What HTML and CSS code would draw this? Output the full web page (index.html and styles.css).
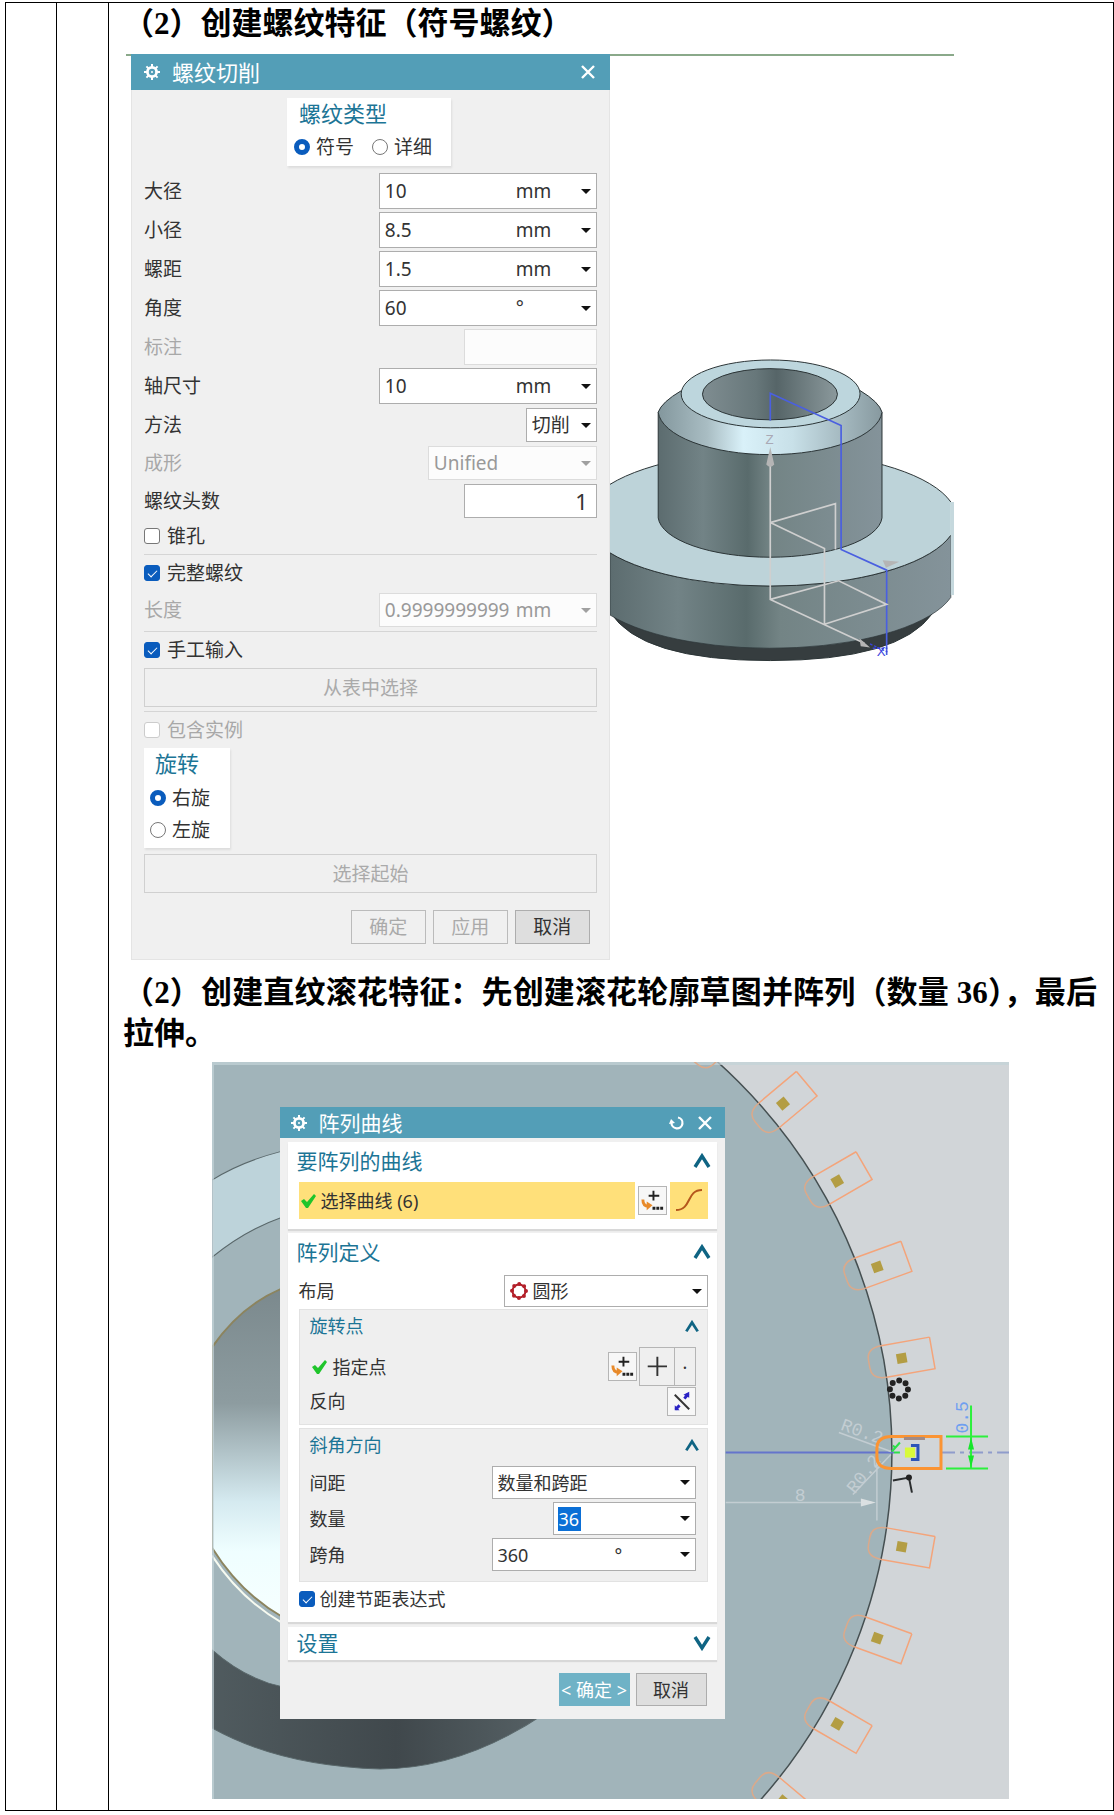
FILE: index.html
```html
<!DOCTYPE html>
<html lang="zh-CN">
<head>
    <meta charset="UTF-8">
    <meta name="viewport" content="width=device-width, initial-scale=1.0">
    <title>创建螺纹特征</title>
    <link rel="stylesheet" href="styles.css">
</head>
<body>

<svg width="0" height="0" class="sprite" aria-hidden="true">
    <symbol id="gear" viewBox="0 0 16 16">
        <circle cx="8" cy="8" r="4.6" fill="none" stroke="currentColor" stroke-width="2.8"/>
        <path d="M8 0v3M8 13v3M0 8h3M13 8h3M2.4 2.4l2 2M11.6 11.6l2 2M2.4 13.6l2-2M11.6 4.4l2-2" stroke="currentColor" stroke-width="2"/>
        <circle cx="8" cy="8" r="1" fill="currentColor"/>
    </symbol>
    <symbol id="close" viewBox="0 0 16 16">
        <path d="M2 2l12 12M14 2L2 14" fill="none" stroke="currentColor" stroke-width="2.4"/>
    </symbol>
    <symbol id="reset" viewBox="0 0 16 16">
        <path d="M9 2.5a5.5 5.5 0 1 1-6.5 5" fill="none" stroke="currentColor" stroke-width="2.2"/>
        <path d="M0 9l2-5 4 4z" fill="currentColor"/>
    </symbol>
    <symbol id="up" viewBox="0 0 18 16">
        <path d="M2 14L9 3l7 11" fill="none" stroke="currentColor" stroke-width="3.4"/>
    </symbol>
    <symbol id="down" viewBox="0 0 18 16">
        <path d="M2 2l7 11 7-11" fill="none" stroke="currentColor" stroke-width="3.4"/>
    </symbol>
    <symbol id="ok" viewBox="0 0 16 16">
        <path d="M1 8l3-2 3 3 7-8 2 2-8 12H6z" fill="#1fc52b"/>
    </symbol>
    <symbol id="point" viewBox="0 0 28 28">
        <path d="M15 4v10M10 9h11" stroke="#222" stroke-width="2"/>
        <path d="M4 13c0 5 2 7 6 7" fill="none" stroke="#e88a2a" stroke-width="3"/>
        <path d="M8 15l6 4-6 5z" fill="#e88a2a"/>
        <path d="M14 22h3M18 22h3M22 22h3" stroke="#222" stroke-width="3"/>
    </symbol>
</svg>

<table class="sheet">
<tr>
<td class="narrow"></td>
<td class="narrow"></td>
<td class="content">

    <h2>（2）创建螺纹特征（符号螺纹）</h2>

    <div class="figure thread">
        <form class="dialog">
            <div class="titlebar">
                <svg class="icon"><use href="#gear"/></svg>
                <span class="title">螺纹切削</span>
                <button type="button" aria-label="关闭"><svg class="icon"><use href="#close"/></svg></button>
            </div>
            <div class="body">
                <div class="card type">
                    <h3>螺纹类型</h3>
                    <div class="radios">
                        <label><input type="radio" name="type" checked>符号</label>
                        <label><input type="radio" name="type">详细</label>
                    </div>
                </div>

                <div class="rows">
                    <div class="row"><label for="major">大径</label>
                        <div class="field"><input id="major" value="10"><span class="unit">mm</span><button type="button" class="caret" aria-label="选项"></button></div></div>
                    <div class="row"><label for="minor">小径</label>
                        <div class="field"><input id="minor" value="8.5"><span class="unit">mm</span><button type="button" class="caret" aria-label="选项"></button></div></div>
                    <div class="row"><label for="pitch">螺距</label>
                        <div class="field"><input id="pitch" value="1.5"><span class="unit">mm</span><button type="button" class="caret" aria-label="选项"></button></div></div>
                    <div class="row"><label for="angle">角度</label>
                        <div class="field"><input id="angle" value="60"><span class="unit">°</span><button type="button" class="caret" aria-label="选项"></button></div></div>
                    <div class="row off"><label for="callout">标注</label>
                        <div class="field short"><input id="callout" disabled></div></div>
                    <div class="row"><label for="shaft">轴尺寸</label>
                        <div class="field"><input id="shaft" value="10"><span class="unit">mm</span><button type="button" class="caret" aria-label="选项"></button></div></div>
                </div>

                <div class="rows tight">
                    <div class="row"><label for="method">方法</label>
                        <div class="select tiny"><select id="method"><option>切削</option></select></div></div>
                    <div class="row off"><label for="form">成形</label>
                        <div class="select mid"><select id="form" disabled><option>Unified</option></select></div></div>
                    <div class="row"><label for="starts">螺纹头数</label>
                        <div class="field short count"><input id="starts" value="1"></div></div>
                </div>

                <label class="check"><input type="checkbox">锥孔</label>
                <hr>
                <label class="check"><input type="checkbox" checked>完整螺纹</label>
                <div class="rows tight">
                    <div class="row off"><label for="length">长度</label>
                        <div class="field"><input id="length" value="0.99999999999" disabled><span class="unit">mm</span><button type="button" class="caret" aria-label="选项" disabled></button></div></div>
                </div>
                <hr class="spaced">
                <label class="check"><input type="checkbox" checked>手工输入</label>
                <button type="button" class="wide" disabled>从表中选择</button>
                <hr class="spaced">
                <label class="check off"><input type="checkbox" disabled>包含实例</label>

                <div class="card rotate">
                    <h3>旋转</h3>
                    <label><input type="radio" name="hand" checked>右旋</label>
                    <label><input type="radio" name="hand">左旋</label>
                </div>
                <button type="button" class="wide" disabled>选择起始</button>

                <div class="actions">
                    <button type="button" disabled>确定</button>
                    <button type="button" disabled>应用</button>
                    <button type="button">取消</button>
                </div>
            </div>
        </form>

        <svg class="model" viewBox="30 40 1035 940">
            <defs>
                <linearGradient id="wall">
                    <stop offset="0" stop-color="#5c6c6f"/><stop offset=".2" stop-color="#728386"/>
                    <stop offset=".4" stop-color="#596b6c"/><stop offset=".5" stop-color="#738485"/>
                    <stop offset="1" stop-color="#84939a"/>
                </linearGradient>
                <linearGradient id="bevel">
                    <stop offset="0" stop-color="#83979d"/><stop offset=".22" stop-color="#a9bdc3"/>
                    <stop offset=".38" stop-color="#d9f1f9"/><stop offset=".6" stop-color="#c8e0e8"/>
                    <stop offset="1" stop-color="#87999f"/>
                </linearGradient>
                <linearGradient id="bore">
                    <stop offset="0" stop-color="#7f8d91"/><stop offset=".4" stop-color="#67777a"/>
                    <stop offset=".55" stop-color="#566568"/><stop offset="1" stop-color="#8b999c"/>
                </linearGradient>
            </defs>
            <g stroke="#2b3436" stroke-width="3">
                <path d="M30 815Q120 962 512 962Q900 962 1000 820z" fill="#363d3f"/>
                <path d="M30 638V825A560 203 0 0 0 1055 772V585A560 203 0 0 1 30 638z" fill="url(#wall)" stroke-width="2"/>
                <path d="M30 432A560 203 0 0 1 1055 485V585A560 203 0 0 1 30 638z" fill="#bdd3d9" stroke="none"/>
                <path d="M30 432A560 203 0 0 1 1055 485M1055 585A560 203 0 0 1 30 638" fill="none"/>
                <path d="M175 215V533A337 125 0 0 0 848 533V215z" fill="url(#wall)"/>
                <path d="M175 215Q185 185 245 150H782Q840 185 848 215A337 135 0 0 1 175 215z" fill="url(#bevel)"/>
                <ellipse cx="513" cy="160" rx="269" ry="102" fill="#bdd6dd"/>
                <ellipse cx="511" cy="161" rx="203" ry="77" fill="url(#bore)"/>
            </g>
            <path d="M1055 485h10v280h-10z" fill="#c5d8dd"/>
            <path d="M512 240V158L725 255V628L862 690V945" fill="none" stroke="#4a5fe0" stroke-width="5"/>
            <g fill="none" stroke="#cfcfcf" stroke-width="5">
                <path d="M512 370V778L795 910M512 547L708 490V628M512 547L675 625V853M512 778L718 722L862 793L675 853"/>
            </g>
            <path d="M512 320l12 52q-12 14-24 0zM780 895l32 28-28-4zM850 660l50 5-40 18z" fill="#b5b5b5"/>
            <text x="498" y="310" class="axis z">Z</text>
            <text x="832" y="948" class="axis x">X</text>
            <path d="M812 912l52 24M820 925h44" stroke="#3b45dd" stroke-width="4" stroke-dasharray="8 5"/>
        </svg>
    </div>

    <p>（2）创建直纹滚花特征：先创建滚花轮廓草图并阵列（数量 36），最后拉伸。</p>

    <div class="figure pattern">
        <svg class="sketch" viewBox="212 1062 797 736" preserveAspectRatio="xMinYMin slice">
            <defs>
                <linearGradient id="hole" x2="0" y2="1">
                    <stop offset="0" stop-color="#7b898d"/><stop offset=".35" stop-color="#8d9ca0"/>
                    <stop offset=".65" stop-color="#d5eaf0"/><stop offset=".8" stop-color="#effeff"/>
                    <stop offset="1" stop-color="#f6ffff"/>
                </linearGradient>
                <linearGradient id="shade">
                    <stop offset="0" stop-color="#505b5f"/><stop offset=".5" stop-color="#40484c"/>
                    <stop offset="1" stop-color="#5b676b"/>
                </linearGradient>
                <g id="slot">
                    <path d="M940 1436v32h-49M940 1436h-49" fill="none" stroke="#f4a47a" stroke-width="1.5"/>
                    <path d="M891 1468q-15 0-15-12v-8q0-12 15-12" fill="none" stroke="#dba98a" stroke-width="1.5"/>
                    <path d="M904 1447h10v10h-10z" fill="#b39d43"/>
                </g>
            </defs>
            <path d="M212 1062h797v736H212z" fill="#d1d5d8"/>
            <circle cx="367" cy="1452" r="524" fill="#a1b4ba" stroke="#454f51" stroke-width="1.5"/>
            <g stroke="#59676a">
                <path d="M212 1180Q240 1162 282 1151V1217Q245 1230 212 1257z" fill="#bdd3da"/>
                <path d="M212 1347Q240 1306 282 1288V1616Q240 1592 212 1547z" fill="url(#hole)" stroke="#8c845e" stroke-width="2"/>
                <path d="M212 1555Q240 1598 282 1622" fill="none" stroke="#f6faf0" stroke-width="2"/>
                <path d="M212 1649Q245 1678 282 1686H580Q480 1768 380 1768Q280 1765 212 1727z" fill="url(#shade)"/>
            </g>
            <path d="M212 1062h2v736h-2zM212 1062h797v3H212z" fill="#c3d3d8" opacity=".7"/>

            <use href="#slot" transform="rotate(-50 367 1452)"/>
            <use href="#slot" transform="rotate(-40 367 1452)"/>
            <use href="#slot" transform="rotate(-30 367 1452)"/>
            <use href="#slot" transform="rotate(-20 367 1452)"/>
            <use href="#slot" transform="rotate(-10 367 1452)"/>
            <use href="#slot" transform="rotate(10 367 1452)"/>
            <use href="#slot" transform="rotate(20 367 1452)"/>
            <use href="#slot" transform="rotate(30 367 1452)"/>
            <use href="#slot" transform="rotate(40 367 1452)"/>

            <path d="M725 1452h168" stroke="#6474cc" stroke-width="2"/>
            <path d="M940 1452h69" stroke="#8f9ccb" stroke-width="2" stroke-dasharray="14 5 4 5"/>
            <g stroke="#c3cdd2" fill="none" stroke-width="1.5">
                <path d="M725 1502h146M876 1462v58M838 1432l52 19M852 1494l38-40"/>
            </g>
            <path d="M860 1498l15 4-15 4z" fill="#dbe0e2"/>
            <g class="dim">
                <text x="794" y="1500">8</text>
                <text x="839" y="1429" transform="rotate(20 839 1429)">R0.2</text>
                <text x="854" y="1494" transform="rotate(-52 854 1494)">R0.2</text>
                <text x="967" y="1433" class="blue" transform="rotate(-90 967 1433)">0.5</text>
            </g>
            <path d="M945 1436h42M945 1468h42M970 1405v63" stroke="#2cf03c" stroke-width="2"/>
            <path d="M970 1437l3 12h-6zM970 1467l3-12h-6z" fill="#16e62a"/>
            <path d="M940 1436v32h-49q-15 0-15-12v-8q0-12 15-12z" fill="none" stroke="#fb9433" stroke-width="3"/>
            <path d="M903 1438h21" stroke="#a08a86" stroke-width="3"/>
            <path d="M910 1445h7v14h-7" fill="none" stroke="#2c55b8" stroke-width="3"/>
            <path d="M904 1447h10v10h-10z" fill="#d8fa39"/>
            <path d="M891 1451l8-9M893 1452h6M892 1445l3 3" stroke="#2be04a" stroke-width="2"/>
            <path d="M892 1480l16-3 3 15" fill="none" stroke="#2a2d2e" stroke-width="2"/>
            <circle cx="908" cy="1477" r="3" fill="#222"/>
            <circle cx="898" cy="1389" r="9" fill="none" stroke="#222" stroke-width="6" stroke-linecap="round" stroke-dasharray="0 7.07"/>
        </svg>

        <form class="dialog">
            <div class="titlebar">
                <svg class="icon"><use href="#gear"/></svg>
                <span class="title">阵列曲线</span>
                <button type="button" aria-label="重置"><svg class="icon"><use href="#reset"/></svg></button>
                <button type="button" aria-label="关闭"><svg class="icon"><use href="#close"/></svg></button>
            </div>

            <div class="section curves">
                <div class="head"><h3>要阵列的曲线</h3><svg class="chevron"><use href="#up"/></svg></div>
                <div class="pick">
                    <div class="selected"><svg class="icon"><use href="#ok"/></svg>选择曲线 (6)</div>
                    <button type="button" class="tool" aria-label="指定点"><svg><use href="#point"/></svg></button>
                    <button type="button" class="curve" aria-label="曲线">
                        <svg viewBox="0 0 38 37"><path d="M6 28c16 0 10-20 26-20" fill="none" stroke="#b5561c" stroke-width="2"/></svg>
                    </button>
                </div>
            </div>

            <div class="section define">
                <div class="head"><h3>阵列定义</h3><svg class="chevron"><use href="#up"/></svg></div>
                <div class="row layout"><label for="layout">布局</label>
                    <div class="select with-icon">
                        <svg class="ring" viewBox="0 0 18 18">
                            <circle cx="9" cy="9" r="6.5" fill="none" stroke="#b3202a" stroke-width="2"/>
                            <circle cx="9" cy="9" r="7" fill="none" stroke="#b3202a" stroke-width="4" stroke-linecap="round" stroke-dasharray="0 5.5"/>
                        </svg>
                        <select id="layout"><option>圆形</option></select>
                    </div>
                </div>

                <div class="group">
                    <div class="head"><h4>旋转点</h4><svg class="chevron"><use href="#up"/></svg></div>
                    <div class="row point">
                        <span class="name"><svg class="icon"><use href="#ok"/></svg>指定点</span>
                        <button type="button" class="tool" aria-label="点对话框"><svg><use href="#point"/></svg></button>
                        <div class="split">
                            <button type="button" aria-label="光标位置"><svg viewBox="0 0 36 36"><path d="M18 8v20M8 18h20" stroke="#333" stroke-width="2"/></svg></button>
                            <button type="button" aria-label="更多">·</button>
                        </div>
                    </div>
                    <div class="row reverse">
                        <span class="name">反向</span>
                        <button type="button" class="tool" aria-label="反向">
                            <svg viewBox="0 0 28 28"><path d="M7 7l15 15" stroke="#333" stroke-width="2"/><path d="M8 22l4-4M17 11l4-5" stroke="#2a22c4" stroke-width="3"/><path d="M16 7l6-3v6zM7 18v5h5z" fill="#2a22c4"/></svg>
                        </button>
                    </div>
                </div>

                <div class="group angles">
                    <div class="head"><h4>斜角方向</h4><svg class="chevron"><use href="#up"/></svg></div>
                    <div class="rows">
                        <div class="row"><label for="spacing">间距</label>
                            <div class="select"><select id="spacing"><option>数量和跨距</option></select></div></div>
                        <div class="row"><label for="qty">数量</label>
                            <div class="field short"><span class="marked"><input id="qty" value="36"></span><button type="button" class="caret" aria-label="选项"></button></div></div>
                        <div class="row"><label for="span">跨角</label>
                            <div class="field"><input id="span" value="360"><span class="unit">°</span><button type="button" class="caret" aria-label="选项"></button></div></div>
                    </div>
                </div>
                <label class="check"><input type="checkbox" checked>创建节距表达式</label>
            </div>

            <div class="section settings">
                <div class="head"><h3>设置</h3><svg class="chevron"><use href="#down"/></svg></div>
            </div>

            <div class="actions">
                <button type="button" class="primary">&lt; 确定 &gt;</button>
                <button type="button">取消</button>
            </div>
        </form>
    </div>

</td>
</tr>
</table>

</body>
</html>
```

FILE: styles.css
```css
* { box-sizing: border-box; }
body { margin: 0; padding: 2px 0 5px 5px; background: white; color: #000; }
.sprite { position: absolute; }

.sheet { width: 100%; border-collapse: collapse; }
.sheet td { border: 1px solid #000; padding: 0; vertical-align: top; }
.sheet .narrow { width: 51px; }
.sheet .narrow + .narrow { width: 52px; }
.sheet .content { padding: 0 16px 11px 14px; }

h2, p {
    margin: 0; font-family: "Liberation Serif", "Noto Sans CJK SC", serif;
    font-size: 31px; font-weight: bold; line-height: 41px;
}
p { margin-top: 12px; text-align: justify; }

/* dialogs */
.dialog {
    font-family: "Noto Sans", "Noto Sans CJK SC", sans-serif; font-size: 19px; line-height: 24px;
    color: #333; background: #f0f0f0;
}
input, select, button { font: inherit; color: inherit; }
button, input, select { margin: 0; padding: 0; border: 0; background: none; }
button { cursor: pointer; }
h3, h4 { margin: 0; font-weight: normal; color: #1c7596; }
h3 { font-size: 22px; }
h4 { font-size: 18px; }
.icon { display: block; width: 16px; height: 16px; flex: none; }

.titlebar { display: flex; align-items: center; gap: 12px; padding: 0 14px 0 13px; height: 36px; background: #539eb7; color: white; }
.titlebar .title { flex: 1; font-size: 22px; }

.row { display: flex; align-items: center; justify-content: space-between; }
.off { color: #a8a8a8; }

.field, .select { position: relative; display: flex; align-items: center; width: 218px; height: 100%; background: white; border: 1px solid #adadad; }
.field input { flex: 1; min-width: 0; padding-left: 5px; }
.field .unit { width: 66px; padding-left: 6px; }
.off .field, .off .select { border-color: #dcdcdc; background: #fcfcfc; color: #999; }
.field.short { width: 133px; }
.count input { text-align: right; padding-right: 8px; font-size: 22px; }
.caret { width: 20px; height: 100%; flex: none; }
.caret::before, .select::after {
    content: ""; display: block; width: 0; border: 5px solid transparent; border-top-color: #111; border-bottom: 0;
}
.caret::before { margin: 0 auto; }
.select::after { position: absolute; right: 5px; pointer-events: none; }
.off .caret::before, .off .select::after { border-top-color: #a0a0a0; }
.select select { appearance: none; width: 100%; height: 100%; padding-left: 5px; opacity: 1; }
.select.tiny { width: 71px; }
.select.mid { width: 169px; }

input[type=checkbox], input[type=radio] {
    appearance: none; width: 16px; height: 16px; flex: none; border: 1px solid #777; border-radius: 3px; background: white;
}
input[type=checkbox]:checked { border-color: #0a5cbd; background: #0a5cbd; }
input[type=checkbox]:checked::before {
    content: ""; display: block; width: 8px; height: 4px; margin: 4px 3px; border: solid white; border-width: 0 0 1px 1px; transform: rotate(-45deg);
}
input[type=checkbox]:disabled { border-color: #ccc; }
input[type=radio] { border-radius: 50%; }
input[type=radio]:checked { border: 5px solid #0a5cbd; }
.check { display: flex; align-items: center; gap: 7px; height: 36px; }

.actions { display: flex; justify-content: flex-end; gap: 7px; }
.actions button { width: 75px; height: 34px; border: 1px solid #adadad; background: #dedede; }
.actions button:disabled { background: #f0f0f0; border-color: #bbb; color: #aaa; }

/* thread figure */
.thread { display: flex; align-items: center; max-width: 828px; margin-top: 10px; margin-left: 3px; padding-left: 5px; border-top: 2px solid #8aa98a; }
.thread .dialog { flex: 478; margin-top: -2px; border: 1px solid #e4e4e4; border-top: 0; }
.thread .titlebar { margin-right: -1px; margin-left: -1px; }
.thread .body { padding: 8px 12px 15px; }
.model { flex: 345; min-width: 0; margin-top: 5px; }
.axis { font-family: "Liberation Sans", Arial, sans-serif; font-size: 40px; fill: #a9a9b5; }
.axis.x { fill: #3b45dd; }

.card { background: white; box-shadow: 1px 2px 2px #ddd; }
.card label { display: flex; align-items: center; gap: 6px; }
.card.type { width: 164px; height: 68px; margin-left: 143px; padding: 3px 7px; }
.card.type h3 { padding-left: 5px; }
.radios { display: flex; gap: 18px; margin-top: 10px; }
.card.rotate { width: 86px; height: 100px; padding: 3px 6px; }
.card.rotate h3 { padding-left: 5px; margin-bottom: 11px; }
.card.rotate label { margin-bottom: 8px; }

.rows { display: grid; grid-auto-rows: 36px; gap: 3px; margin-top: 7px; }
.rows.tight { grid-auto-rows: 34px; gap: 4px; margin-top: 4px; }
hr { margin: 0; border: 0; border-top: 1px solid #d5d5d5; }
hr.spaced { margin-top: 4px; }
hr + .check + .rows { margin-top: 2px; }
.wide { display: block; width: 100%; height: 39px; border: 1px solid #d0d0d0; color: #aaa; }
.card + .wide { margin-top: 6px; }
.thread .actions { margin-top: 17px; padding-right: 7px; }

/* pattern figure */
.pattern { position: relative; max-width: 797px; margin: 8px auto 0; padding: 45px 0 80px 68px; }
.sketch { position: absolute; top: 0; left: 0; width: 100%; height: 100%; }
.dim { font-family: "Liberation Mono", monospace; font-size: 18px; fill: #c3cdd2; }
.dim .blue { fill: #6f9ff0; }
.pattern .dialog { position: relative; width: 445px; max-width: 90%; padding-bottom: 13px; font-size: 18px; }
.pattern .titlebar { height: 31px; padding: 0 12px 0 11px; }
.pattern h3, .pattern .title { font-size: 21px; }

.section { margin: 4px 8px 0; padding: 4px 9px 0 11px; background: white; box-shadow: 0 2px 1px #d8d8d8; }
.head { display: flex; justify-content: space-between; align-items: center; height: 30px; margin: 0 -3px 0 -2px; color: #0f6483; }
.chevron { width: 18px; height: 16px; }
.pick { display: flex; align-items: center; gap: 3px; margin-top: 6px; padding-bottom: 10px; }
.selected { flex: 1; display: flex; align-items: center; gap: 5px; height: 37px; padding-left: 1px; background: #ffe07a; }
.tool { width: 29px; height: 29px; border: 1px solid #b5b5b5; background: #f7f7f7; }
.tool svg { display: block; width: 27px; height: 27px; }
.curve { width: 38px; height: 37px; background: #ffe07a; }
.curve svg { display: block; }

.define { height: 389px; }
.layout { height: 32px; margin-top: 8px; }
.pattern .select, .pattern .field { width: 204px; }
.with-icon .ring { position: absolute; left: 5px; width: 18px; height: 18px; pointer-events: none; }
.with-icon select { padding-left: 28px; }

.group { height: 116px; margin-top: 2px; padding: 1px 11px 0 10px; background: #efefef; border: 1px solid #e2e2e2; }
.group .head { margin: 0 -4px 0 0; }
.group .chevron { width: 16px; height: 13px; }
.name { flex: 1; display: flex; align-items: center; gap: 6px; }
.point { height: 39px; margin-top: 6px; gap: 2px; }
.point .icon { margin-left: 1px; }
.split { display: flex; width: 57px; height: 39px; border: 1px solid #b5b5b5; }
.split button { flex: 20; }
.split button:first-child { flex: 36; border-right: 1px solid #b5b5b5; }
.split svg { display: block; }
.reverse { height: 30px; }
.angles { height: 154px; margin-top: 3px; }
.angles .rows { grid-auto-rows: 33px; margin-top: 6px; }
.pattern .field.short { width: 143px; }
.marked { flex: 1; padding-left: 4px; }
.field .marked input { width: 23px; padding: 0 1px; background: #0b6fd6; color: white; }
.section .check { height: 34px; gap: 5px; }
.settings { height: 33px; margin-top: 5px; padding-top: 1px; }
.pattern .actions { margin-top: 13px; padding-right: 18px; gap: 6px; }
.pattern .actions button { width: 71px; height: 33px; }
.pattern .actions .primary { border-color: #6fb2c6; background: #6fb2c6; color: white; }
```
